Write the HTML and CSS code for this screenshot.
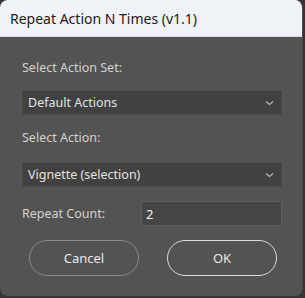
FILE: index.html
```html
<!DOCTYPE html>
<html lang="en">
<head>
    <meta charset="UTF-8">
    <meta name="viewport" content="width=device-width, initial-scale=1.0">
    <title>Repeat Action N Times</title>
    <link rel="stylesheet" href="styles.css">
</head>
<body>
    <div class="dialog">
        <div class="titlebar">Repeat Action N Times (v1.1)</div>
        <div class="content">
            <div class="label label-set">Select Action Set:</div>
            <div class="dropdown">
                <span>Default Actions</span>
                <svg class="chevron" width="9" height="6" viewBox="0 0 9 6"><path d="M1 1.5 L4.5 4.5 L8 1.5" fill="none" stroke="#bdbdbd" stroke-width="1.1"/></svg>
            </div>
            <div class="label label-action">Select Action:</div>
            <div class="dropdown">
                <span>Vignette (selection)</span>
                <svg class="chevron" width="9" height="6" viewBox="0 0 9 6"><path d="M1 1.5 L4.5 4.5 L8 1.5" fill="none" stroke="#bdbdbd" stroke-width="1.1"/></svg>
            </div>
            <div class="count-row">
                <span class="label">Repeat Count:</span>
                <input class="count" type="text" value="2">
            </div>
            <div class="actions">
                <button class="btn cancel">Cancel</button>
                <button class="btn ok">OK</button>
            </div>
        </div>
    </div>
</body>
</html>
```

FILE: styles.css
```css
body {
    margin: 0;
    background-color: #363636;
    font-family: 'Noto Sans', 'Open Sans', sans-serif;
    height: 298px;
    overflow: hidden;
}
.dialog {
    width: 302px;
    height: 296px;
    background-color: #535353;
    border-radius: 8px;
    border-right: 1px solid #474747;
    overflow: hidden;
}
.titlebar {
    height: 37px;
    background-color: #eff2f7;
    color: #1b1b1b;
    font-size: 14px;
    line-height: 37px;
    padding-left: 10px;
    border-bottom: 1px solid #d8dade;
    box-sizing: border-box;
}
.content {
    padding: 22px 20px 0 22px;
}
.label {
    color: #d2d2d2;
    font-size: 12.5px;
    line-height: 18px;
}
.label-set {
    margin-bottom: 13px;
}
.label-action {
    margin-top: 14px;
    margin-bottom: 15px;
}
.dropdown {
    display: flex;
    justify-content: space-between;
    align-items: center;
    height: 25px;
    box-sizing: border-box;
    background-color: #414141;
    border: 1px solid #4b4b4b;
    color: #e2e2e2;
    font-size: 12.5px;
    padding: 0 7px 0 5px;
}
.count-row {
    display: flex;
    align-items: center;
    justify-content: space-between;
    margin-top: 14px;
}
.count {
    width: 141px;
    height: 25px;
    box-sizing: border-box;
    background-color: #454545;
    border: 1px solid #5e5e5e;
    color: #f0f0f0;
    font-family: inherit;
    font-size: 13px;
    padding: 0 4px;
    outline: none;
}
.actions {
    display: flex;
    gap: 28px;
    margin-top: 14px;
    padding-left: 7px;
}
.btn {
    width: 110px;
    height: 36px;
    border-radius: 18px;
    background: transparent;
    color: #e8e8e8;
    font-family: inherit;
    font-size: 13px;
    cursor: pointer;
}
.cancel {
    border: 1px solid #8c8c8c;
}
.ok {
    border: 1.5px solid #dcdcdc;
}
```
